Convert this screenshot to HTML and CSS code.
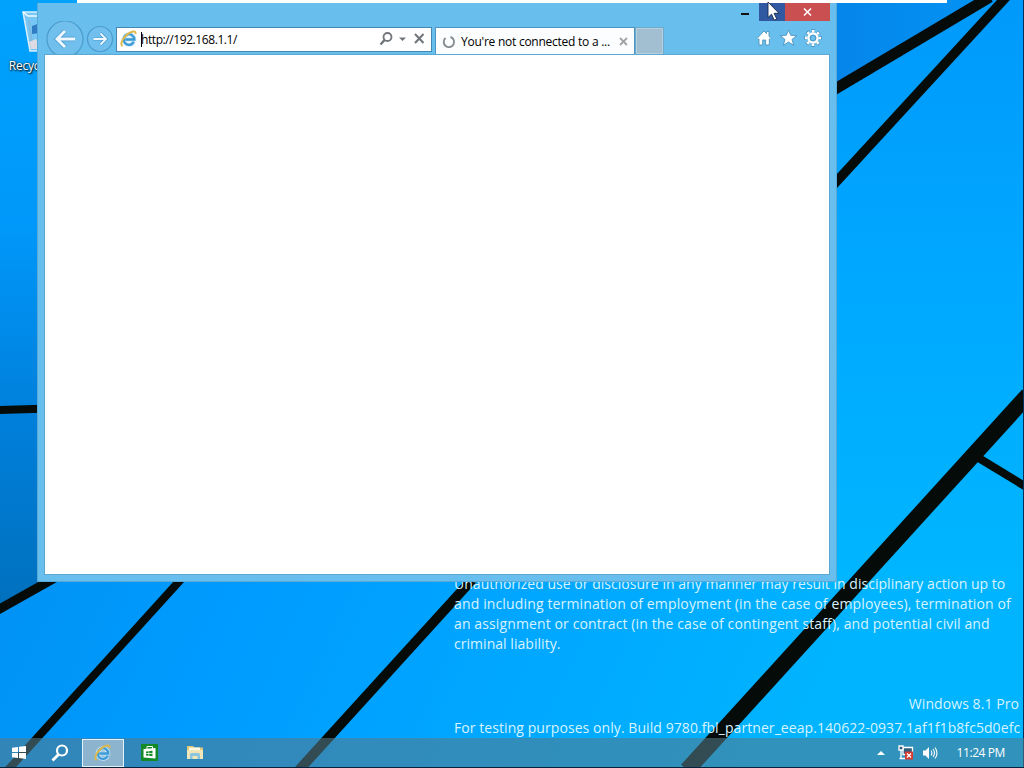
FILE: index.html
```html
<!DOCTYPE html>
<html lang="en">
  <head>
    <meta charset="UTF-8" />
    <meta name="viewport" content="width=device-width, initial-scale=1.0" />
    <title>Desktop</title>
    <link rel="stylesheet" href="styles.css">
  </head>
  <body>
    <svg width="0" height="0" class="defs">
      <symbol id="ie" viewBox="0 0 18 18">
        <path d="M13.8 11.8A5.3 5.3 0 1 1 14.3 9.5H5.2" fill="none" stroke="#c4e6f8" stroke-width="4" />
        <path d="M13.8 11.8A5.3 5.3 0 1 1 14.3 9.5H5.2" fill="none" stroke="#3c9ad6" stroke-width="2.300" />
        <path d="M2.600 16.200C-1 14 4 5.500 10 2.600c4-2 6-1.400 5.600 1.600" fill="none" stroke="#dfb84c" stroke-width="1.900" />
      </symbol>
    </svg>

    <div class="desktop">
      <svg class="wallpaper" viewBox="0 0 1024 768">
        <defs>
          <linearGradient id="sky" x1="0" y1="0" x2="1" y2="0.35">
            <stop offset="0" stop-color="#0089e8" />
            <stop offset="0.45" stop-color="#009bff" />
            <stop offset="1" stop-color="#00b4ff" />
          </linearGradient>
          <linearGradient id="left" x1="0" y1="0" x2="0" y2="1">
            <stop offset="0" stop-color="#00a2fc" />
            <stop offset="0.55" stop-color="#0098fa" />
            <stop offset="1" stop-color="#0080dc" />
          </linearGradient>
          <linearGradient id="shade" x1="0" y1="0" x2="0" y2="1">
            <stop offset="0" stop-color="#0080dc" />
            <stop offset="1" stop-color="#0070bd" />
          </linearGradient>
          <linearGradient id="right" x1="0" y1="0" x2="0" y2="1">
            <stop offset="0" stop-color="#0099fb" />
            <stop offset="0.5" stop-color="#00a9ff" />
            <stop offset="1" stop-color="#00b6ff" />
          </linearGradient>
          <linearGradient id="corner" x1="0" y1="0" x2="1" y2="0">
            <stop offset="0" stop-color="#0584e8" />
            <stop offset="1" stop-color="#0393f4" />
          </linearGradient>
        </defs>
        <rect width="1024" height="768" fill="url(#sky)" />
        <rect width="80" height="410" fill="url(#left)" />
        <path d="M0 410H60V578L0 609z" fill="url(#shade)" />
        <path d="M820 0H1024V590H820z" fill="url(#right)" />
        <path d="M820 0H985L820 97z" fill="url(#corner)" />
        <g stroke="#050b08" fill="none">
          <path d="M-2 410L50 408.500" stroke-width="8" />
          <path d="M-4 611L60 575" stroke-width="9" />
          <path d="M8 770L184 576" stroke-width="8" />
          <path d="M299 770L480 571" stroke-width="10" />
          <path d="M687 770L1028 395" stroke-width="16" />
          <path d="M977 457L1028 488" stroke-width="8" />
          <path d="M825 95L990 -3" stroke-width="11" />
          <path d="M825 194L1008 -5" stroke-width="9.500" />
        </g>
        <path d="M1023.500 0V768" stroke="#06305c" stroke-width="1" />
      </svg>

      <div class="recycle">
        <svg width="34" height="44" viewBox="0 0 34 44">
          <path d="M2 3L32 3L27 42H9z" fill="#b7dcf2" fill-opacity="0.65" stroke="#d9eefa" stroke-width="1.500" />
          <path d="M2 3L7 7H30" fill="none" stroke="#f1faff" stroke-width="1.500" />
          <path d="M8 11L11 35" stroke="#7fb9df" stroke-width="2" />
          <path d="M11 17l8-3v10l-8 1z" fill="#2f7cc4" />
          <path d="M8 33l7-3 5 10H10z" fill="#dcdbe3" />
        </svg>
        <span>Recycle Bin</span>
      </div>

      <div class="watermark">
        <p class="notice">
          <span class="n1">Unauthorized use or disclosure in any manner may result in disciplinary action up to</span>
          <span class="n2">and including termination of employment (in the case of employees), termination of</span>
          <span class="n3">an assignment or contract (in the case of contingent staff), and potential civil and</span>
          <span class="n4">criminal liability.</span>
        </p>
        <p class="edition">Windows 8.1 Pro</p>
        <p class="build">For testing purposes only. Build 9780.fbl_partner_eeap.140622-0937.1af1f1b8fc5d0efc</p>
      </div>

      <div class="back-window"></div>

      <div class="window">
        <div class="caption">
          <button class="min" aria-label="Minimize"></button>
          <button class="max" aria-label="Maximize"></button>
          <button class="close" aria-label="Close">
            <svg width="9" height="8" viewBox="0 0 9 8"><path d="M1 .5l7 7M8 .5l-7 7" stroke="#fff" stroke-width="1.500" /></svg>
          </button>
        </div>
        <div class="toolbar">
          <svg class="nav" width="71" height="34" viewBox="0 0 71 34">
            <g fill="#70bfed" stroke="#4c9bcd" stroke-width="1.200">
              <circle cx="20" cy="18" r="18" />
              <circle cx="55" cy="18" r="12.500" />
            </g>
            <g fill="none" stroke="#4a9bd0" stroke-width="4.500">
              <path d="M30 18H12M20 10l-8 8 8 8" />
              <path d="M48.500 18h12M55.500 12.500l5.500 5.500-5.500 5.500" stroke-width="3.200" />
            </g>
            <g fill="none" stroke="#eef8fe">
              <path d="M30 18H12M20 10l-8 8 8 8" stroke-width="2.900" />
              <path d="M48.500 18h12M55.500 12.500l5.500 5.500-5.500 5.500" stroke-width="1.800" />
            </g>
          </svg>
          <div class="address">
            <svg width="18" height="18"><use href="#ie" /></svg>
            <span class="caret"></span>
            <span class="url">http://192.168.1.1/</span>
            <svg class="tools" width="47" height="16" viewBox="0 0 47 16" fill="none" stroke="#70757a">
              <circle cx="8.500" cy="6" r="4" stroke-width="1.800" />
              <path d="M5.700 8.900L1.500 13.500" stroke-width="2.300" />
              <path d="M20 6.500h7l-3.500 3.500z" fill="#70757a" stroke="none" />
              <path d="M36 3l8.500 9M44.500 3L36 12" stroke-width="2" />
            </svg>
          </div>
          <div class="tab">
            <svg width="14" height="14" viewBox="0 0 14 14"><path d="M8.500 2A5.200 5.200 0 1 1 3.500 3" fill="none" stroke="#858c92" stroke-width="1.900" /></svg>
            <span class="title">You're not connected to a ...</span>
            <svg class="tab-close" width="9" height="9" viewBox="0 0 9 9"><path d="M1 1l7 7M8 1L1 8" stroke="#a0a4a7" stroke-width="1.800" /></svg>
          </div>
          <div class="new-tab"></div>
          <svg class="commands" width="68" height="18" viewBox="0 0 68 18">
            <g fill="#fff" stroke="#438bb9" stroke-width="0.800">
              <path d="M1 9.500L8 2l2.500 2.500V2.500H13v4.700l2 2.300-1 1-.7-.6V16H9.600v-5H6.700v5H3V9.900l-1 .7z" />
              <path d="M32.500 1l2.200 5.300 6 .3-4.700 3.800 1.700 5.900-5.200-3.300-5.200 3.300 1.700-5.900-4.700-3.800 6-.3z" />
            </g>
            <circle cx="57" cy="9" r="6.800" fill="none" stroke="#438bb9" stroke-width="4" stroke-dasharray="3.200 2.140" stroke-dashoffset="1.600" />
            <circle cx="57" cy="9" r="6.800" fill="none" stroke="#fff" stroke-width="2.600" stroke-dasharray="2.600 2.740" stroke-dashoffset="1.300" />
            <circle cx="57" cy="9" r="4.500" fill="none" stroke="#fff" stroke-width="2.400" />
            <circle cx="57" cy="9" r="2.900" fill="none" stroke="#438bb9" stroke-width="0.800" />
          </svg>
        </div>
        <div class="page"></div>
      </div>

      <div class="taskbar">
        <svg class="start" width="14" height="13" viewBox="0 0 14 13" fill="#fff">
          <path d="M0 1.800L6 1v5H0zM7 .8L14 0v6H7zM0 7h6v5l-6-.8zM7 7h7v6l-7-.9z" />
        </svg>
        <svg class="search" width="18" height="18" viewBox="0 0 18 18" fill="none" stroke="#fff">
          <circle cx="11" cy="6.500" r="5" stroke-width="2.200" />
          <path d="M7.500 10.500L1.500 16.500" stroke-width="2.800" />
        </svg>
        <div class="task">
          <svg width="18" height="18"><use href="#ie" /></svg>
        </div>
        <svg class="store" width="17" height="17" viewBox="0 0 17 17">
          <rect width="17" height="17" fill="#128a27" />
          <path d="M2.500 5L14.500 4v10.500l-12-1z" fill="#fff" />
          <path d="M6 5V2.500h5.500V5" fill="none" stroke="#fff" />
          <path d="M5 7.500l2.600-.3v1.900H5zM8.200 7.100l3.300-.4v2.400H8.200zM5 9.700h2.600v2L5 11.400zM8.200 9.700h3.300v2.500l-3.300-.4z" fill="#128a27" />
        </svg>
        <svg class="explorer" width="18" height="15" viewBox="0 0 18 15">
          <path d="M1 1h6l1.500 1.500H17V14H1z" fill="#dfc878" />
          <path d="M3 2.500h11v3H3z" fill="#fffbe5" />
          <path d="M1 5h16v9H1z" fill="#f0e6b8" />
          <path d="M4 14V9.500Q4 8 5.500 8h7Q14 8 14 9.500V14h-2.500v-3h-5v3z" fill="#8cc5df" />
        </svg>
        <div class="tray">
          <svg width="8" height="5" viewBox="0 0 8 5"><path d="M0 5L4 1l4 4z" fill="#fff" /></svg>
          <svg class="network" width="16" height="15" viewBox="0 0 16 15">
            <path d="M5 2.500h9.500v7H5z" fill="#315d7b" stroke="#fff" stroke-width="1.300" />
            <path d="M1 1h4v4H1zM3 5v9M1.500 13.500h6" fill="#315d7b" stroke="#fff" stroke-width="1.300" />
            <rect x="7" y="6.500" width="8" height="8" fill="#d63a32" />
            <path d="M9 8.500l4 4M13 8.500l-4 4" stroke="#fff" stroke-width="1.400" />
          </svg>
          <svg class="volume" width="16" height="14" viewBox="0 0 16 14">
            <path d="M1 4.500h2.500L7 1v12L3.500 9.500H1z" fill="#fff" />
            <path d="M9 4.500q1.800 2.500 0 5M11 3q3 4 0 8M13 1.500q4 5.500 0 11" fill="none" stroke="#fff" stroke-width="1.100" />
          </svg>
          <span class="clock">11:24 PM</span>
        </div>
      </div>

      <svg class="cursor" width="13" height="21" viewBox="0 0 13 21">
        <path d="M1 1v15.500l3.500-3.300 2.700 6 2.600-1.200-2.700-5.700H12z" fill="#fff" stroke="#14284a" stroke-width="0.900" />
      </svg>
    </div>
  </body>
</html>
```

FILE: styles.css
```css
body {
  margin: 0;
  font-family: "Open Sans", "Noto Sans", sans-serif;
  background: #009bff;
  overflow: hidden;
}

svg {
  display: block;
  flex: none;
}

p {
  margin: 0;
}

.defs {
  position: absolute;
}

.desktop {
  position: relative;
  width: 1024px;
  height: 768px;
  overflow: hidden;
}

.wallpaper {
  position: absolute;
  width: 1024px;
  height: 768px;
}

/* Desktop icon, partly covered by the window */
.recycle {
  position: absolute;
  left: 4px;
  top: 9px;
  width: 70px;
  color: #fff;
  font-size: 12px;
  letter-spacing: -0.2px;
  line-height: 16px;
  text-align: center;
  text-shadow: 1px 1px 2px #000, 0 0 2px #123;
}

.recycle svg {
  margin: 0 0 5px 17px;
}

/* Build information in the lower right corner */
.watermark {
  position: absolute;
  left: 454px;
  top: 574px;
  width: 566px;
  color: #d8f3ff;
  font-size: 14px;
  line-height: 20px;
  white-space: nowrap;
}

.notice span {
  display: block;
}

.n1 {
  letter-spacing: 0.03px;
}

.n2 {
  letter-spacing: 0.14px;
}

.n3 {
  letter-spacing: 0.12px;
}

.n4 {
  letter-spacing: 0.04px;
}

.edition {
  margin-top: 40px;
  padding-right: 1px;
  letter-spacing: 0.07px;
  text-align: right;
}

.build {
  margin-top: 4px;
  letter-spacing: 0.07px;
}

.back-window {
  position: absolute;
  left: 77px;
  top: 0;
  width: 870px;
  height: 3px;
  background: #fff;
}

/* Browser window */
.window {
  position: absolute;
  left: 37px;
  top: 3px;
  width: 800px;
  height: 579px;
  box-sizing: border-box;
  padding: 0 7px 7px;
  display: flex;
  flex-direction: column;
  background: #68bfed;
  border: 1px solid #58a9d8;
  border-top: 0;
}

.caption {
  display: flex;
  justify-content: flex-end;
  height: 18px;
  margin-right: -1px;
}

.caption button {
  border: 0;
  padding: 0;
  height: 18px;
}

.min {
  width: 28px;
  background: linear-gradient(#111, #111) 10px 10px / 8px 2px no-repeat;
}

.max {
  width: 26px;
  background: #3159a2;
}

.close {
  display: flex;
  align-items: center;
  justify-content: center;
  width: 45px;
  background: #c94f50;
}

.toolbar {
  display: flex;
  align-items: flex-end;
  height: 34px;
}

.nav {
  width: 71px;
}

.address {
  display: flex;
  align-items: center;
  box-sizing: border-box;
  width: 316px;
  height: 25px;
  margin-bottom: 3px;
  padding: 0 5px 1px 3px;
  background: #fff;
  border: 1px solid #4387b2;
  font-size: 12px;
}

.caret {
  width: 1px;
  height: 15px;
  margin-left: 3px;
  background: #000;
}

.url {
  margin-left: -1px;
  letter-spacing: -0.42px;
}

.tools {
  margin-left: auto;
}

.tab {
  display: flex;
  align-items: center;
  box-sizing: border-box;
  width: 200px;
  height: 28px;
  margin-left: 3px;
  padding: 0 6px;
  background: #fcfdfe;
  border: 1px solid #4c94c1;
  border-bottom: 0;
  font-size: 12px;
  white-space: nowrap;
}

.title {
  margin-left: 5px;
  letter-spacing: -0.25px;
}

.tab-close {
  margin-left: auto;
}

.new-tab {
  box-sizing: border-box;
  width: 29px;
  height: 28px;
  background: #a1bfd1;
  border: 1px solid #6faacd;
  box-shadow: inset 0 0 0 1px #b5d0df;
}

.commands {
  margin: 0 5px 8px auto;
}

.page {
  flex: 1;
  background: #fff;
  outline: 1px solid #5ba8d2;
}

/* Taskbar */
.taskbar {
  position: absolute;
  left: 0;
  top: 738px;
  width: 1024px;
  height: 30px;
  box-sizing: border-box;
  display: flex;
  align-items: center;
  background: rgba(85, 122, 138, 0.58);
  border-bottom: 1px solid #06223d;
}

.start {
  margin-left: 12px;
}

.search {
  margin-left: 25px;
}

.task {
  display: flex;
  align-items: center;
  justify-content: center;
  box-sizing: border-box;
  width: 42px;
  height: 28px;
  margin-left: 13px;
  background: #8db4cf;
  border: 1px solid #e3f1f9;
}

.store {
  margin-left: 17px;
}

.explorer {
  margin-left: 28px;
}

.tray {
  display: flex;
  align-items: center;
  margin-left: auto;
  padding-right: 19px;
  color: #fff;
  font-size: 12px;
}

.network {
  margin-left: 13px;
}

.volume {
  margin-left: 8px;
}

.clock {
  margin-left: 18px;
  letter-spacing: -0.4px;
}

.cursor {
  position: absolute;
  left: 767px;
  top: 1px;
}
```
